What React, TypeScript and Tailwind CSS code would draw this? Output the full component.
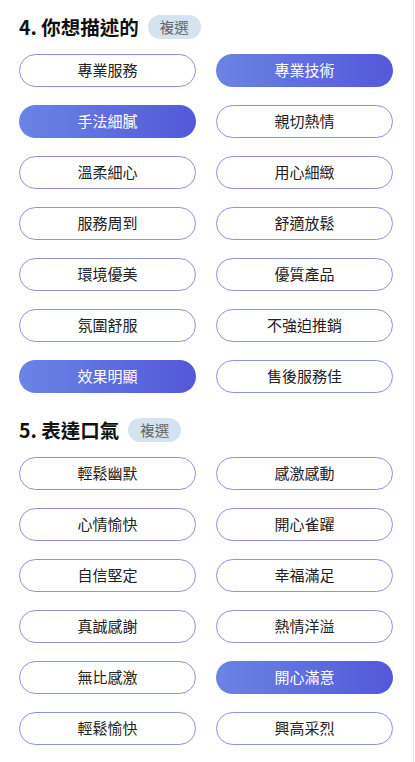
const sections = [
  {
    title: "4. 你想描述的",
    options: [
      "專業服務", "專業技術", "手法細膩", "親切熱情", "溫柔細心", "用心細緻",
      "服務周到", "舒適放鬆", "環境優美", "優質產品", "氛圍舒服", "不強迫推銷",
      "效果明顯", "售後服務佳",
    ],
    selected: ["專業技術", "手法細膩", "效果明顯"],
  },
  {
    title: "5. 表達口氣",
    options: [
      "輕鬆幽默", "感激感動", "心情愉快", "開心雀躍", "自信堅定", "幸福滿足",
      "真誠感謝", "熱情洋溢", "無比感激", "開心滿意", "輕鬆愉快", "興高采烈",
    ],
    selected: ["開心滿意"],
  },
]

const Chip = ({ label, active }: { label: string; active: boolean }) => (
  <button
    type="button"
    className={
      active
        ? "h-[33px] rounded-full bg-gradient-to-r from-[#6a84e4] to-[#5457d9] text-[15px] text-white"
        : "h-[33px] rounded-full border border-[#8e92d8] bg-white text-[15px] text-[#222]"
    }
  >
    {label}
  </button>
)

export default function App() {
  return (
    <div
      className="flex min-h-[762px] w-[415px] bg-white"
      style={{ fontFamily: '"Noto Sans CJK TC", "Noto Sans", sans-serif' }}
    >
      <div className="flex w-[413px] flex-col gap-[25px] pt-[15px] pl-[19px] pr-[20px]">
        {sections.map((s) => (
          <div key={s.title} className="flex flex-col gap-[15px]">
            {/* heading */}
            <div className="flex h-[24px] items-center gap-[9px]">
              <span className="text-[19.5px] font-bold leading-none text-[#111]">{s.title}</span>
              <span className="flex h-[24px] w-[53px] items-center justify-center rounded-full bg-[#d5e3f0] text-[14.5px] text-[#666]">
                複選
              </span>
            </div>
            <div className="grid grid-cols-2 gap-x-[20px] gap-y-[18px]">
              {s.options.map((o) => (
                <Chip key={o} label={o} active={s.selected.includes(o)} />
              ))}
            </div>
          </div>
        ))}
      </div>
      <div className="w-[1px] bg-[#e6e6e6]" />
    </div>
  )
}
